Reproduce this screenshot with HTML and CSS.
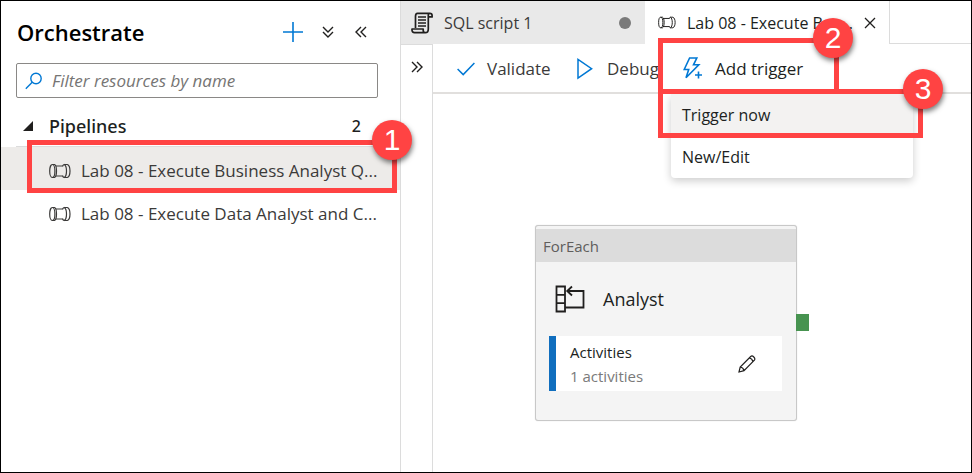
FILE: index.html
```html
<!DOCTYPE html>
<html lang="en">
<head>
<meta charset="utf-8">
<title>Orchestrate</title>
<link rel="stylesheet" href="styles.css">
</head>
<body>
<svg class="defs" aria-hidden="true">
  <symbol id="pipe" viewBox="0 0 22 16">
    <g fill="none" stroke="currentColor" stroke-width="1.2">
      <ellipse cx="3.300" cy="8" rx="2.600" ry="6.500"/>
      <path d="M3.300 1.500h2.200c1.300.6 2 3.300 2 6.500s-.7 5.900-2 6.500H3.300"/>
      <path d="M7 3h7M7 13h7"/>
      <path d="M13.600 3.300c.3-.9.800-1.600 1.500-1.800c1.500.6 2.400 3.300 2.400 6.500s-.9 5.900-2.400 6.500c-.7-.2-1.200-.9-1.500-1.800"/>
      <path d="M15.100 1.500h3.200c1.700.6 2.700 3.300 2.700 6.500s-1 5.900-2.700 6.500h-3.200"/>
    </g>
  </symbol>
  <symbol id="chevrons" viewBox="0 0 12 12">
    <path d="M6 1L1 6l5 5M11 1L6 6l5 5" fill="none" stroke="currentColor" stroke-width="1.400"/>
  </symbol>
</svg>
<div class="app">
  <aside class="sidebar">
    <header class="side-head">
      <h1>Orchestrate</h1>
      <button class="icon-btn add" aria-label="Add new resource"><svg width="20" height="20" viewBox="0 0 20 20"><path d="M10 0v20M0 10h20" stroke="currentColor" stroke-width="1.600"/></svg></button>
      <button class="icon-btn" aria-label="Expand all"><svg class="down" width="12" height="12"><use href="#chevrons"/></svg></button>
      <button class="icon-btn" aria-label="Collapse pane"><svg width="12" height="12"><use href="#chevrons"/></svg></button>
    </header>
    <label class="search">
      <svg width="18" height="18" viewBox="0 0 18 18"><g fill="none" stroke="currentColor" stroke-width="1.400"><circle cx="11" cy="6.500" r="5.200"/><path d="M7.200 10.300L.8 16.700"/></g></svg>
      <input type="text" placeholder="Filter resources by name" aria-label="Filter resources by name">
    </label>
    <div class="group">
      <svg width="10" height="10" viewBox="0 0 10 10"><path d="M10 0v10H0z" fill="currentColor"/></svg>
      <h2>Pipelines</h2>
      <span class="count">2</span>
    </div>
    <ul class="pipelines">
      <li class="selected"><a href="#"><svg width="22" height="16"><use href="#pipe"/></svg><span>Lab 08 - Execute Business Analyst Q...</span></a>
        <div class="mark mark-one"><b class="badge">1</b></div></li>
      <li><a href="#"><svg width="22" height="16"><use href="#pipe"/></svg><span>Lab 08 - Execute Data Analyst and C...</span></a></li>
    </ul>
  </aside>
  <main class="workspace">
    <nav class="tabs">
      <a class="tab" href="#">
        <svg width="22" height="22" viewBox="0 0 22 22"><g fill="none" stroke="currentColor" stroke-width="1.700" stroke-linejoin="round"><path d="M4.500 16V4.500C4.500 2 5 1.300 6.500 1.300h12.300c1.600 0 2.300 1 2.300 2.300v1.300h-3.800v12c0 2.600-1.200 3.800-3 3.800H3.500C1.800 20.700 1 19.500 1 18v-1h11.200v1.300c0 1.400.8 2.400 2.100 2.400M17.300 5V3.300c0-1.200.6-2 1.500-2M7 5h8M7 8h8M7 11h8M7 14h8"/></g></svg>
        <span>SQL script 1</span><i class="dirty"></i>
      </a>
      <a class="tab active" href="#">
        <svg width="18" height="13"><use href="#pipe"/></svg>
        <span>Lab 08 - Execute Bus...</span>
        <svg width="12" height="12" viewBox="0 0 12 12"><path d="M1 1l10 10M11 1L1 11" stroke="currentColor" stroke-width="1.300"/></svg>
      </a>
      <div class="tab-rest"></div>
    </nav>
    <div class="editor">
      <div class="rail"><button class="icon-btn" aria-label="Expand pane"><svg class="flip" width="12" height="12"><use href="#chevrons"/></svg></button></div>
      <div class="pane">
        <div class="toolbar">
          <button class="tool validate"><svg width="18" height="14" viewBox="0 0 18 14"><path d="M.6 7l5.600 5.600L17.400 1" fill="none" stroke="currentColor" stroke-width="1.500"/></svg>Validate</button>
          <button class="tool debug"><svg width="16" height="22" viewBox="0 0 16 22"><path d="M1 1.500v18.500L14.600 10.700z" fill="none" stroke="currentColor" stroke-width="1.500"/></svg>Debug</button>
          <div class="trigger">
            <button class="tool"><svg width="20" height="23" viewBox="0 0 20 23"><path d="M6.600 1h7.200l-3.300 6.800h5.300L3 20.800l2.700-8.300H1.200zM15.500 14.500v7M12 18h7" fill="none" stroke="currentColor" stroke-width="1.600"/></svg>Add trigger</button>
            <div class="mark mark-two"><b class="badge">2</b></div>
            <div class="menu">
              <button class="hover">Trigger now</button>
              <button>New/Edit</button>
              <div class="mark mark-three"><b class="badge">3</b></div>
            </div>
          </div>
        </div>
        <div class="canvas">
          <section class="node">
            <header>ForEach</header>
            <div class="node-name">
              <svg width="30" height="28" viewBox="0 0 30 28"><g fill="none" stroke="currentColor" stroke-width="1.800"><path d="M1.500 1.500h8.500v25H1.500zM1.500 9.800H10M1.500 18.200H10M10 22.500h18.500V6H12.500M17 1.500L12.200 6l4.800 4.500"/></g></svg>
              <span>Analyst</span>
            </div>
            <div class="activities">
              <div><strong>Activities</strong><small>1 activities</small></div>
              <button class="icon-btn" aria-label="Edit activities"><svg width="18" height="18" viewBox="0 0 18 18"><path d="M1 17l1.200-5L12.700 1.500c1.800-1.600 5.200 1.700 3.700 3.700L6 15.700zM2.200 12c1.800.2 3.400 1.800 3.800 3.700M11.300 3c1.800.3 3.200 1.800 3.600 3.600" fill="none" stroke="currentColor" stroke-width="1.200"/></svg></button>
            </div>
            <i class="port"></i>
          </section>
        </div>
      </div>
    </div>
  </main>
</div>
</body>
</html>
```
FILE: styles.css
```css
* { box-sizing: border-box; }
body { margin: 0; font: 16px/24px "Open Sans", "Noto Sans", sans-serif; color: #3b3a39; background: #fff; }
h1, h2, ul { margin: 0; padding: 0; }
a { color: inherit; text-decoration: none; }
button { font: inherit; color: inherit; background: none; border: 0; padding: 0; }
svg { display: block; flex: none; }
.defs { position: absolute; width: 0; height: 0; }
.app { display: flex; min-height: 100vh; border: 1px solid #000; }

.sidebar { flex: 0 0 400px; border-right: 1px solid #dcdcdc; }
.side-head { display: flex; align-items: center; gap: 21px; height: 62px; padding: 0 33px 0 16px; }
h1 { flex: 1; font-size: 22px; font-weight: 600; color: #000; }
.icon-btn { display: flex; color: #201f1e; }
.add { color: #0078d4; }
.side-head .add { margin-right: -2px; }
.down { transform: rotate(-90deg); }
.flip { transform: rotate(180deg); }
.search { display: flex; align-items: center; gap: 9px; height: 35px; margin: 0 22px 0 15px; padding: 0 8px; border: 1px solid #8a8886; border-radius: 2px; color: #0078d4; }
.search input { flex: 1; min-width: 0; border: 0; padding: 0; outline: 0; background: none; font: inherit; font-size: 17px; }
.search input::placeholder { font-family: "Open Sans", sans-serif; font-size: 17px; color: #767574; font-style: italic; opacity: 1; }
.group { display: flex; align-items: center; gap: 16px; height: 49px; margin-left: 15px; padding: 8px 39px 0 7px; border-bottom: 1px solid #dcdcdc; color: #201f1e; }
h2 { flex: 1; font-size: 18px; font-weight: 500; font-family: "Noto Sans", sans-serif; }
.count { font-weight: 500; font-family: "Noto Sans", sans-serif; }
.pipelines { list-style: none; font-size: 17px; }
.pipelines li { position: relative; }
.pipelines a { display: flex; align-items: center; gap: 10px; height: 43px; padding: 4px 0 0 48px; white-space: nowrap; }
.selected { background: #edebe9; }

.workspace { flex: 1; min-width: 0; display: flex; flex-direction: column; }
.tabs { display: flex; height: 43px; }
.tab { display: flex; align-items: center; gap: 11px; flex: 0 0 244px; padding: 0 14px 0 10px; background: #e9e9e9; white-space: nowrap; }
.tab > svg { color: #201f1e; }
.tab span { flex: 1; }
.tab.active { flex-basis: 243px; background: #fff; padding: 0 13px; font-weight: 500; color: #201f1e; }
.tab.active span { min-width: 0; }
.dirty { width: 12px; height: 12px; border-radius: 50%; background: #7a7a7a; }
.tab-rest { flex: 1; border: solid #dcdcdc; border-width: 0 0 1px 1px; }
.editor { flex: 1; display: flex; }
.rail { flex: 0 0 32px; display: flex; justify-content: center; align-items: flex-start; padding-top: 16px; border: solid #dcdcdc; border-width: 1px 1px 0 0; }
.pane { flex: 1; min-width: 0; }
.toolbar { display: flex; height: 50px; padding-left: 24px; border-bottom: 2px solid #e1dfdd; font-size: 17px; }
.tool { display: flex; align-items: center; gap: 12px; height: 49px; white-space: nowrap; }
.tool svg { color: #0078d4; }
.validate { flex: 0 0 120px; }
.debug { flex: 0 0 81px; gap: 14px; overflow: hidden; }
.trigger { position: relative; padding-left: 25px; color: #201f1e; }
.menu { position: absolute; z-index: 1; left: 13px; top: 50px; width: 242px; border-radius: 4px; background: #fff; box-shadow: 0 3px 8px rgba(0, 0, 0, .2); font-size: 16px; }
.menu button { display: block; width: 100%; height: 42px; padding: 0 11px; text-align: left; }
.menu .hover { background: #f3f2f1; }

.mark { position: absolute; z-index: 2; border: 5px solid #ff4343; pointer-events: none; }
.badge { position: absolute; top: -25px; width: 40px; height: 40px; border-radius: 50%; background: #ff4343; color: #fff; font: 30px/40px "Liberation Sans", sans-serif; text-align: center; box-shadow: 1px 3px 5px rgba(0, 0, 0, .5); }
.mark-one { left: 26px; top: -7px; width: 370px; height: 53px; }
.mark-two { z-index: 3; left: 0; top: -6px; width: 181px; height: 56px; }
.mark-three { left: -13px; top: -5px; width: 265px; height: 49px; }
.mark-one .badge { right: -20px; }
.mark-two .badge { right: -19px; }
.mark-three .badge { right: -25px; }

.canvas { padding: 131px 0 0 102px; }
.node { position: relative; width: 262px; height: 196px; padding-top: 3px; border: 1px solid #c8c8c8; border-radius: 3px; background: #f4f4f4; box-shadow: 0 0 1px #c8c8c8; }
.node header { height: 33px; padding: 0 7px; line-height: 34px; background: #dcdcdc; color: #605e5c; font-size: 15px; }
.node-name { display: flex; align-items: center; gap: 18px; height: 74px; padding-left: 19px; font-size: 18px; color: #201f1e; }
.activities { display: flex; align-items: center; justify-content: space-between; height: 55px; margin: 0 14px 0 13px; padding: 0 26px 0 14px; border-left: 7px solid #106ebe; background: #fff; }
.activities strong, .activities small { display: block; font-size: 15px; font-weight: 400; color: #201f1e; }
.activities small { color: #7a7a7a; }
.port { position: absolute; left: 100%; top: 88px; width: 13px; height: 17px; background: #479350; }
```
